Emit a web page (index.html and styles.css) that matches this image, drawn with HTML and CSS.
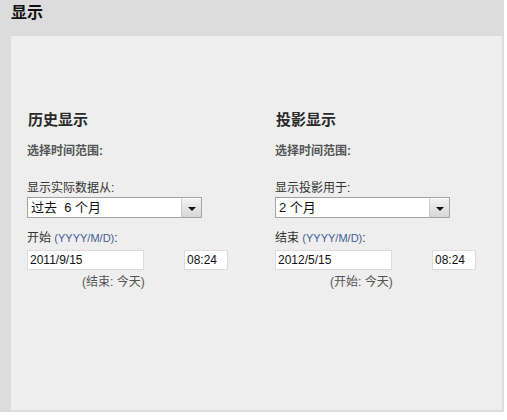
FILE: index.html
```html
<!DOCTYPE html>
<html>
<head>
<meta charset="utf-8">
<link rel="stylesheet" href="styles.css">
</head>
<body>
<div class="frame">
  <div class="title">显示</div>
  <div class="panel">
    <div class="col">
      <div class="heading">历史显示</div>
      <div class="sub">选择时间范围:</div>
      <div class="label">显示实际数据从:</div>
      <div class="select"><span class="val">过去&nbsp; 6 个月</span><span class="btn"><span class="arrow"></span></span></div>
      <div class="label label2">开始 <span class="fmt">(YYYY/M/D)</span>:</div>
      <div class="inputs">
        <div class="input date">2011/9/15</div>
        <div class="input time">08:24</div>
      </div>
      <div class="hint">(结束: 今天)</div>
    </div>
    <div class="col">
      <div class="heading">投影显示</div>
      <div class="sub">选择时间范围:</div>
      <div class="label">显示投影用于:</div>
      <div class="select"><span class="val">2 个月</span><span class="btn"><span class="arrow"></span></span></div>
      <div class="label label2">结束 <span class="fmt">(YYYY/M/D)</span>:</div>
      <div class="inputs">
        <div class="input date">2012/5/15</div>
        <div class="input time">08:24</div>
      </div>
      <div class="hint">(开始: 今天)</div>
    </div>
  </div>
</div>
</body>
</html>
```
FILE: styles.css
```css
html, body {
  margin: 0;
  padding: 0;
  background: #ffffff;
}
body {
  font-family: "Liberation Sans", "Noto Sans CJK SC", sans-serif;
  color: #333333;
}
.frame {
  width: 504px;
  height: 412px;
  background: #dcdcdc;
  display: flex;
  flex-direction: column;
}
.title {
  height: 36px;
  box-sizing: border-box;
  padding: 3px 0 0 11px;
  font-size: 16px;
  line-height: 20px;
  font-weight: bold;
  color: #111111;
}
.panel {
  margin-left: 11px;
  width: 491px;
  height: 374px;
  box-sizing: border-box;
  background: #eeeeee;
  padding: 75px 0 0 16px;
  display: grid;
  grid-template-columns: 248px 227px;
  align-items: start;
}
.col {
  display: flex;
  flex-direction: column;
}
.heading {
  font-size: 15px;
  line-height: 18px;
  font-weight: bold;
  color: #2a2a2a;
  padding-left: 1px;
}
.sub {
  margin-top: 14px;
  font-size: 12px;
  line-height: 16px;
  font-weight: bold;
  color: #555555;
}
.label {
  margin-top: 21px;
  font-size: 12px;
  line-height: 16px;
  color: #333333;
}
.label2 {
  margin-top: 12px;
}
.fmt {
  color: #3f5e98;
  font-size: 11px;
}
.select {
  margin-top: 1px;
  width: 175px;
  height: 21px;
  box-sizing: border-box;
  border: 1px solid #a3a3a3;
  background: #ffffff;
  display: flex;
}
.val {
  flex: 1;
  font-size: 13px;
  line-height: 19px;
  padding-left: 3px;
  color: #111111;
}
.btn {
  width: 20px;
  box-sizing: border-box;
  border-left: 1px solid #c8c8c8;
  border-top: 1px solid #ffffff;
  background: linear-gradient(#f2f2f2, #d6d6d6);
  display: flex;
  align-items: center;
  justify-content: center;
}
.arrow {
  width: 0;
  height: 0;
  border-left: 4px solid transparent;
  border-right: 4px solid transparent;
  border-top: 4px solid #111111;
  margin-top: 2px;
}
.inputs {
  margin-top: 4px;
  display: flex;
  gap: 40px;
}
.input {
  height: 20px;
  box-sizing: border-box;
  border: 1px solid #dcdcdc;
  background: #ffffff;
  font-size: 12px;
  line-height: 18px;
  padding-left: 2px;
  color: #111111;
}
.date {
  width: 117px;
}
.time {
  width: 44px;
}
.hint {
  margin-top: 4px;
  padding-left: 55px;
  font-size: 12px;
  line-height: 16px;
  color: #555555;
}
```
